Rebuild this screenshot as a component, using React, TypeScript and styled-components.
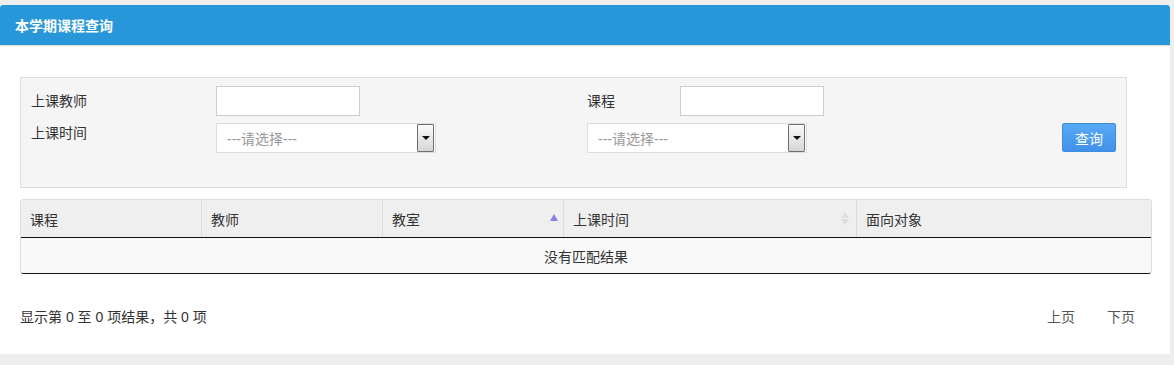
import React from 'react'
import styled, { createGlobalStyle } from 'styled-components'

const GlobalStyle = createGlobalStyle`
  body {
    margin: 0;
    background: #eeeeee;
    font-family: "Liberation Sans", "Noto Sans CJK SC", sans-serif;
    font-size: 14px;
    color: #333;
  }
`

const Wrap = styled.div`
  padding-top: 5px;
  height: 360px;
`

const Panel = styled.div`
  width: 1170px;
  background: #fff;
`

const PanelHead = styled.div`
  height: 41px;
  background: #2897da;
  border-radius: 3px 3px 0 0;
  border-bottom: 1px solid #dddddd;
  box-sizing: border-box;
  display: flex;
  align-items: center;
  padding-left: 15px;
  color: #fff;
  font-size: 14px;
  font-weight: bold;
`

const PanelBody = styled.div`
  padding: 31px 20px 20px 20px;
`

const FilterBox = styled.div`
  width: 1107px;
  height: 111px;
  box-sizing: border-box;
  background: #f5f5f5;
  border: 1px solid #dddddd;
  padding: 8px 10px 0 10px;
  display: grid;
  grid-template-columns: 185px 371px 93px 1fr auto;
  grid-template-rows: 30px 30px;
  row-gap: 7px;
`

const Label = styled.div<{ $top?: boolean }>`
  align-self: ${p => (p.$top ? 'start' : 'center')};
  line-height: 20px;
  color: #333;
`

const TextInput = styled.input`
  width: 144px;
  height: 30px;
  box-sizing: border-box;
  border: 1px solid #cccccc;
  background: #fff;
  outline: none;
  padding: 0 8px;
  font-family: inherit;
`

const SelectBox = styled.div<{ $span?: number }>`
  grid-column: span ${p => p.$span || 1};
  width: 220px;
  height: 30px;
  box-sizing: border-box;
  border: 1px solid #dddddd;
  background: #fff;
  display: flex;
  align-items: center;
  justify-content: space-between;
  padding-left: 10px;
  padding-right: 1px;
  color: #999;
`

const ArrowBox = styled.span`
  width: 17px;
  height: 28px;
  box-sizing: border-box;
  border: 1px solid #6f6f6f;
  border-radius: 1px;
  background: linear-gradient(#fafafa, #d6d6d6);
  display: flex;
  align-items: center;
  justify-content: center;
  &::after {
    content: '';
    border-left: 4px solid transparent;
    border-right: 4px solid transparent;
    border-top: 4px solid #111;
  }
`

const SearchButton = styled.button`
  grid-column: 5;
  justify-self: end;
  width: 54px;
  height: 29px;
  border: 1px solid #3d8ce0;
  border-radius: 2px;
  background: linear-gradient(#58a9f4, #4191ea);
  color: #fff;
  font-family: inherit;
  font-size: 14px;
  padding: 0;
`

const Table = styled.div`
  margin-top: 11px;
  width: 1130px;
  border: 1px solid #dddddd;
  border-bottom: 1px solid #111;
  border-radius: 4px;
  overflow: hidden;
`

const HeadRow = styled.div`
  display: grid;
  grid-template-columns: 181px 181px 181px 293px 1fr;
  height: 37px;
  background: #efefef;
  border-bottom: 1px solid #111;
`

const HeadCell = styled.div`
  display: flex;
  align-items: center;
  justify-content: space-between;
  padding: 0 5px 0 9px;
  border-right: 1px solid #dddddd;
  color: #333;
  &:last-child {
    border-right: none;
  }
`

const SortAsc = styled.span`
  width: 0;
  height: 0;
  border-left: 4.5px solid transparent;
  border-right: 4.5px solid transparent;
  border-bottom: 7px solid #8383ea;
  margin-bottom: 2px;
`

const SortBoth = styled.span`
  display: flex;
  flex-direction: column;
  gap: 1px;
  margin-right: 2px;
  &::before,
  &::after {
    content: '';
    border-left: 4px solid transparent;
    border-right: 4px solid transparent;
  }
  &::before {
    border-bottom: 6px solid #dddddd;
  }
  &::after {
    border-top: 6px solid #dddddd;
  }
`

const EmptyRow = styled.div`
  height: 35px;
  background: #f9f9f9;
  display: flex;
  align-items: center;
  justify-content: center;
  color: #333;
`

const Footer = styled.div`
  margin-top: 24px;
  height: 36px;
  display: flex;
  align-items: center;
  justify-content: space-between;
  width: 1130px;
`

const Pager = styled.div`
  display: flex;
  gap: 4px;
  padding-right: 1px;
`

const PageButton = styled.span`
  padding: 6px 14px;
  color: #555;
`

const columns = ['课程', '教师', '教室', '上课时间', '面向对象']

export default function App() {
  return (
    <Wrap>
      <GlobalStyle />
      <Panel>
        <PanelHead>本学期课程查询</PanelHead>
        <PanelBody>
          <FilterBox>
            <Label>上课教师</Label>
            <div>
              <TextInput type="text" />
            </div>
            <Label>课程</Label>
            <div>
              <TextInput type="text" />
            </div>
            <div />
            <Label $top>上课时间</Label>
            <SelectBox>
              <span>---请选择---</span>
              <ArrowBox />
            </SelectBox>
            <SelectBox $span={2}>
              <span>---请选择---</span>
              <ArrowBox />
            </SelectBox>
            <SearchButton>查询</SearchButton>
          </FilterBox>
          <Table>
            <HeadRow>
              {columns.map(c => (
                <HeadCell key={c}>
                  <span>{c}</span>
                  {c === '教室' && <SortAsc />}
                  {c === '上课时间' && <SortBoth />}
                </HeadCell>
              ))}
            </HeadRow>
            <EmptyRow>没有匹配结果</EmptyRow>
          </Table>
          <Footer>
            <span>显示第 0 至 0 项结果，共 0 项</span>
            <Pager>
              <PageButton>上页</PageButton>
              <PageButton>下页</PageButton>
            </Pager>
          </Footer>
        </PanelBody>
      </Panel>
    </Wrap>
  )
}
